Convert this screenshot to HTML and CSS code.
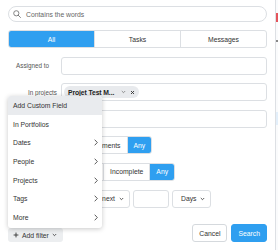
FILE: index.html
```html
<!DOCTYPE html>
<html lang="en">
<head>
  <meta charset="UTF-8">
  <title>Advanced search</title>
  <link rel="stylesheet" href="styles.css">
</head>
<body>
  <div class="page">
    <div class="panel">
      <div class="search">
        <svg class="search-icon" width="8" height="8" viewBox="0 0 8 8"><circle cx="3.3" cy="3.3" r="2.6" fill="none" stroke="#777" stroke-width="0.9"/><path d="M5.2 5.2 L7.5 7.5" stroke="#777" stroke-width="0.9" stroke-linecap="round"/></svg>
        <span>Contains the words</span>
      </div>

      <div class="tabs">
        <div class="tab active">All</div>
        <div class="tab">Tasks</div>
        <div class="tab">Messages</div>
      </div>

      <div class="rows">
        <div class="row">
          <label class="label label-short">Assigned to</label>
          <div class="input"></div>
        </div>
        <div class="row">
          <label class="label">In projects</label>
          <div class="input">
            <span class="chip">Projet Test M...
              <svg width="5" height="4" viewBox="0 0 5 4"><path d="M0.8 1 L2.5 2.7 L4.2 1" fill="none" stroke="#777" stroke-width="0.8"/></svg>
              <svg width="5" height="5" viewBox="0 0 5 5"><path d="M1 1 L4 4 M4 1 L1 4" stroke="#333" stroke-width="0.9"/></svg>
            </span>
          </div>
        </div>
        <!-- labels of the next rows sit under the open menu -->
        <div class="row">
          <span class="label"></span>
          <div class="input"></div>
        </div>
        <div class="row">
          <span class="label"></span>
          <div class="segments">
            <div class="seg">With attachments</div>
            <div class="seg on">Any</div>
          </div>
        </div>
        <div class="row">
          <span class="label"></span>
          <div class="segments">
            <div class="seg">Complete</div>
            <div class="seg">Incomplete</div>
            <div class="seg on">Any</div>
          </div>
        </div>
        <div class="row">
          <span class="label"></span>
          <div class="box select">Within the next
            <svg width="5" height="4" viewBox="0 0 5 4"><path d="M0.8 1 L2.5 2.7 L4.2 1" fill="none" stroke="#333" stroke-width="0.8"/></svg>
          </div>
          <div class="box num"></div>
          <div class="box select">Days
            <svg width="5" height="4" viewBox="0 0 5 4"><path d="M0.8 1 L2.5 2.7 L4.2 1" fill="none" stroke="#333" stroke-width="0.8"/></svg>
          </div>
        </div>
      </div>

      <div class="footer">
        <div class="add-filter">
          <svg width="6" height="6" viewBox="0 0 6 6"><path d="M3 0.6 V5.4 M0.6 3 H5.4" stroke="#333" stroke-width="0.9"/></svg>
          Add filter
          <svg width="5" height="4" viewBox="0 0 5 4"><path d="M0.8 1 L2.5 2.7 L4.2 1" fill="none" stroke="#333" stroke-width="0.8"/></svg>
        </div>
        <div class="actions">
          <div class="btn">Cancel</div>
          <div class="btn primary">Search</div>
        </div>
      </div>

      <div class="menu">
        <div class="item first">Add Custom Field</div>
        <div class="item">In Portfolios</div>
        <div class="item">Dates <svg width="4" height="7" viewBox="0 0 4 7"><path d="M0.7 0.7 L3.3 3.5 L0.7 6.3" fill="none" stroke="#333" stroke-width="0.8"/></svg></div>
        <div class="item">People <svg width="4" height="7" viewBox="0 0 4 7"><path d="M0.7 0.7 L3.3 3.5 L0.7 6.3" fill="none" stroke="#333" stroke-width="0.8"/></svg></div>
        <div class="item">Projects <svg width="4" height="7" viewBox="0 0 4 7"><path d="M0.7 0.7 L3.3 3.5 L0.7 6.3" fill="none" stroke="#333" stroke-width="0.8"/></svg></div>
        <div class="item">Tags <svg width="4" height="7" viewBox="0 0 4 7"><path d="M0.7 0.7 L3.3 3.5 L0.7 6.3" fill="none" stroke="#333" stroke-width="0.8"/></svg></div>
        <div class="item">More <svg width="4" height="7" viewBox="0 0 4 7"><path d="M0.7 0.7 L3.3 3.5 L0.7 6.3" fill="none" stroke="#333" stroke-width="0.8"/></svg></div>
      </div>
    </div>

    <div class="behind">
      <div class="flag"></div>
      <div class="tick"></div>
      <div class="hl"></div>
    </div>
  </div>
</body>
</html>
```

FILE: styles.css
```css
body {
  margin: 0;
  font-family: "Liberation Sans", Arial, sans-serif;
  font-size: 6.8px;
  color: #333;
  background: #fff;
}
.page {
  display: flex;
  width: 278px;
  height: 250px;
  overflow: hidden;
}
.panel {
  position: relative;
  width: 259px;
  padding: 6px 8px 0 8px;
  border-right: 1px solid #dde0e4;
  background: #fff;
}
.search {
  display: flex;
  align-items: center;
  gap: 5px;
  height: 14px;
  padding: 0 6px 0 4px;
  border: 1px solid #dcdfe3;
  border-radius: 8px;
  color: #666;
}
.tabs {
  display: flex;
  margin-top: 8px;
  height: 16px;
  border: 1px solid #dcdfe3;
  border-radius: 3px;
  overflow: hidden;
}
.tab {
  flex: 1;
  display: flex;
  align-items: center;
  justify-content: center;
  border-left: 1px solid #dcdfe3;
}
.tab:first-child {
  border-left: none;
}
.tab.active {
  background: #2f9ff0;
  color: #fff;
}
.rows {
  display: flex;
  flex-direction: column;
  gap: 8.6px;
  margin-top: 8.6px;
}
.row {
  display: flex;
  align-items: center;
  height: 18px;
}
.label {
  flex: none;
  width: 49px;
  margin-right: 4px;
  text-align: right;
  font-size: 6.3px;
  color: #555;
}
.label-short {
  width: 41px;
  margin-right: 12px;
}
.input {
  flex: 1;
  display: flex;
  align-items: center;
  height: 16px;
  padding: 0 2px;
  border: 1px solid #dcdfe3;
  border-radius: 3px;
}
.chip {
  display: inline-flex;
  align-items: center;
  gap: 4px;
  height: 12px;
  padding: 0 4px 0 4px;
  border-radius: 6px;
  background: #e8eaed;
  color: #222;
  font-weight: bold;
  letter-spacing: -0.1px;
}
.chip svg:first-of-type {
  margin-left: 3px;
}
.segments {
  display: flex;
  height: 16px;
  border: 1px solid #dcdfe3;
  border-radius: 3px;
  overflow: hidden;
}
.seg {
  display: flex;
  align-items: center;
  padding: 0 6px;
  border-left: 1px solid #dcdfe3;
}
.seg:first-child {
  border-left: none;
}
.seg.on {
  background: #2f9ff0;
  color: #fff;
}
.box {
  display: flex;
  align-items: center;
  gap: 4px;
  height: 16px;
  margin-right: 3px;
  border: 1px solid #dcdfe3;
  border-radius: 3px;
}
.select {
  padding: 0 5px 0 8px;
}
.num {
  width: 34px;
}
.footer {
  display: flex;
  justify-content: space-between;
  align-items: flex-end;
  margin-top: 16.5px;
}
.add-filter {
  display: flex;
  align-items: center;
  gap: 3px;
  height: 14px;
  padding: 0 6px 0 5px;
  border-radius: 3px;
  background: #eceef0;
}
.actions {
  display: flex;
  gap: 4px;
}
.btn {
  display: flex;
  align-items: center;
  height: 16px;
  padding: 0 6px;
  border: 1px solid #d5d9dd;
  border-radius: 3px;
  background: #fff;
}
.btn.primary {
  background: #2f9ff0;
  border-color: #2f9ff0;
  color: #fff;
}
.menu {
  position: absolute;
  left: 8px;
  top: 96px;
  width: 94px;
  padding: 0 0 1px 0;
  background: #fff;
  border-radius: 3px;
  box-shadow: 0 1px 5px rgba(0,0,0,0.22);
}
.item {
  display: flex;
  align-items: center;
  justify-content: space-between;
  height: 18.6px;
  padding: 0 4px 0 5px;
}
.item.first {
  height: 19px;
  border-radius: 3px 3px 0 0;
  background: #e9ebee;
}
.behind {
  position: relative;
  flex: 1;
  background: #fafbfc;
}
.flag {
  position: absolute;
  top: 13px;
  left: 0;
  width: 4px;
  height: 9px;
  background: #e4545b;
}
.tick {
  position: absolute;
  top: 40px;
  left: 0;
  width: 2px;
  height: 2px;
  background: #888;
}
.hl {
  position: absolute;
  top: 112px;
  left: 0;
  width: 4px;
  height: 13px;
  background: #e3effa;
}
```
